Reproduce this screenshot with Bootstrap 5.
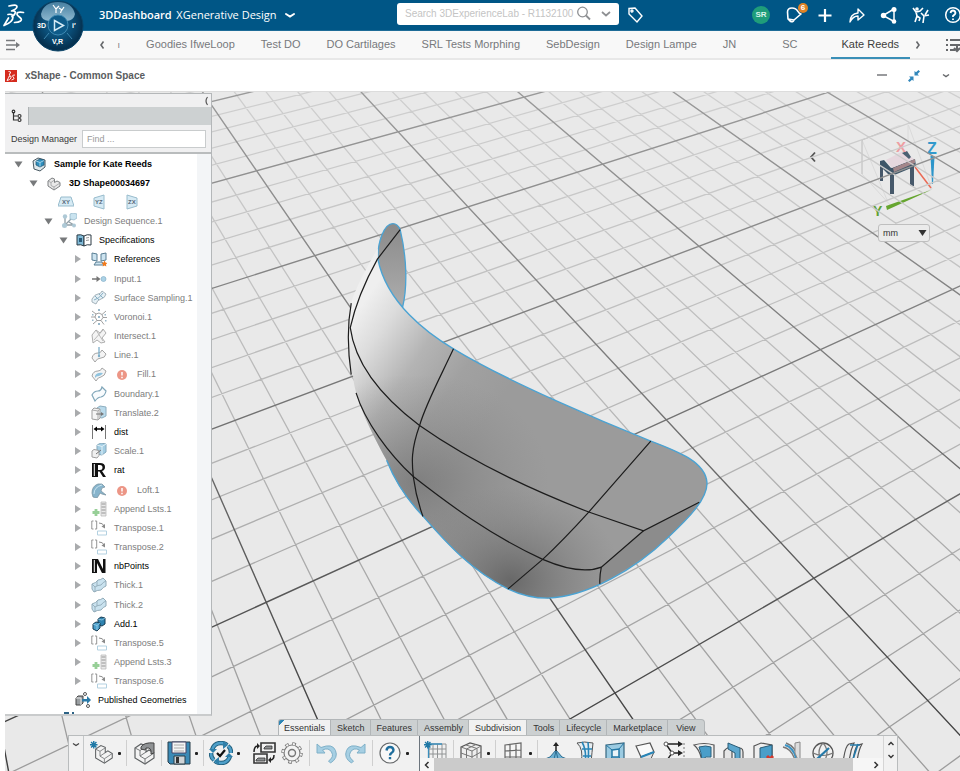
<!DOCTYPE html>
<html lang="en">
<head>
<meta charset="utf-8">
<meta name="viewport" content="width=device-width, initial-scale=1">
<title>3DDashboard XGenerative Design</title>
<link href="https://cdn.jsdelivr.net/npm/bootstrap@5.3.0/dist/css/bootstrap.min.css" rel="stylesheet">
<style>
body{font-family:"Liberation Sans",Arial,sans-serif;font-size:9px;line-height:12px;color:#3a3a3a;background:#fff;overflow-x:hidden}
button{border:0;background:none;padding:0;color:inherit;display:inline-flex;align-items:center;justify-content:center;flex:none}
svg{flex:none;display:block}
.ic16{width:16px;height:16px}
.ic20{width:20px;height:20px}
.ic24{width:24px;height:24px}
/* top bar */
.topbar{background:#005686;height:31px;border-bottom:1px solid #1e6c97;color:#fff;padding-left:2px;position:relative}
.brandbox{flex:0 0 395px}
.brandtitle{margin-left:73px;font:11px/16px "Open Sans","Liberation Sans",sans-serif}
.brandtitle b{font-weight:600}
.compass{position:absolute;left:32px;top:0;z-index:5}
.searchbox{flex:0 1 222px;height:22px;background:#fff;border-radius:3px;padding-left:8px;margin-bottom:2px}
.searchbox input{border:0;outline:0;font-size:10px;min-width:0;padding:0;color:#555}
.searchbox input::placeholder{color:#c4c4c4}
.topact{margin-right:-9px}
.topact button{width:32px;height:28px;position:relative}
.avatar{width:18px;height:18px;border-radius:9px;background:#1f9d7a;font-weight:bold;font-size:8px;line-height:18px;color:#d9f3ea}
.notif{position:absolute;left:21px;top:2px;width:10px;height:10px;border-radius:5px;background:#dd8326;color:#fff;font-size:8px;line-height:10px;font-weight:bold}
/* dashboard tabs */
.dashtabs{background:#f8f8f8;height:29px;border-bottom:2px solid #e8e8e8;color:#77797c;padding-left:5px}
.dashtabs a{font-size:11px;line-height:25px;padding:0 13px;color:#77797c;text-decoration:none;white-space:nowrap}
.dashtabs a.roomy{padding:0 33px}
.dashtabs a.current{color:#3d3d3d;padding:0 11px;border-bottom:2px solid #3a8fb7;margin-bottom:-1px}
.tabtick{padding:0 13px 0 12px}
.wintitle{height:31px;padding-left:5px;color:#5a5d60;font-size:10px}
.wintitle button{width:32px;height:24px}
.winbtns{margin-right:-2px}
/* viewport */
.stage{margin-left:5px;min-height:calc(100vh - 91px);position:relative;background:#e9e9e9;overflow:hidden;border-top:1px solid #dcdcdc}
.scene{position:absolute;left:0;top:0;width:100%;height:100%}
.scene path{vector-effect:non-scaling-stroke}
.treepanel{width:207px;margin-top:1px;background:#f0f0f1;border-top:1px solid #b4b7b9;border-right:1px solid #b4b7b9;border-bottom:2px solid #c9cbcc;position:relative}
.treehead{height:13px;padding-right:2px}
.treetabs{background:#cdd1d2;height:18px}
.treetabs button{width:24px;background:#f0f0f1;border-right:1px solid #aeb2b4}
.finder{height:29px;padding:0 5px 0 6px;border-bottom:2px solid #b9bcbd}
.finder input{height:18px;width:124px;border:1px solid #c9cccd;padding:0 4px;font-size:9px;background:#fff}
.finder input::placeholder{color:#9a9a9a}
.tree{background:#fff;border-right:14px solid #f3f5f7;color:#000;margin:0;padding:0;list-style:none}
.tree li{display:flex;align-items:center;flex:1 1 19px;min-height:19px;white-space:nowrap}
.tree .twist{width:16px;height:16px;margin-right:5px;color:#a9abad}
.tree .open{color:#77797b}
.tree li>.ic16{margin-right:7px}
.lv0{padding-left:5px}.lv1{padding-left:20px}.lv2{padding-left:35px}.lv3{padding-left:50px}.lv4{padding-left:65px}
.lvp{padding-left:70px}.planes{padding-left:53px;gap:10px}
.tree .dim{color:#7d7d7d}
.tree .dim>.ic16{opacity:.62}
.tree li.peek{flex:none;min-height:4px;height:4px;overflow:hidden;align-items:flex-start;padding-left:58px}
.viewtools{margin-right:15px;padding-top:33px}
.cubeback{width:20px;height:20px;margin:22px 32px 0 0}
.unitbox{position:relative;width:52px;margin:4px 0 0 23px}
.unitbox select{appearance:none;width:100%;height:18px;border:1px solid #bfbfbf;border-radius:3px;background:#ebebeb;font-size:9px;line-height:12px;padding:0 4px;color:#333}
.unitbox svg{position:absolute;right:3px;top:5px;pointer-events:none}
/* action bar */
.dockrow{padding-top:3px}
.dock{flex:0 1 830px;min-width:0;margin-left:63px}
.docktabs{margin-left:210px}
.docktabs button{background:#ccd0d1;border:1px solid #b2b6b8;border-width:1px 1px 0 0;height:16px;padding:0 5px 0 6px;font-size:9px;color:#333}
.docktabs button.lit{background:#f1f1f1}
.docktabs button:first-child{padding-left:5px;border-left:1px solid #b2b6b8;border-top-left-radius:3px;background:linear-gradient(135deg,#2f86b5 4px,#f1f1f1 4px)}
.docktabs button:last-child{padding:0 8px;border-top-right-radius:4px}
.dockbar{background:#f1f1f1;border:1px solid #b9bcbd;border-bottom:0;height:36px}
.dockfold{width:15px;border-right:1px solid #c5c8c9;padding-top:6px}
.dockbar .tool{width:28px;height:34px}
.dot{width:7px;height:34px;font-size:8px}
.dot::after{content:"";width:3px;height:3px;background:#222;border-radius:1px}
.rule{width:7px;height:26px;margin-top:4px;background:linear-gradient(#cfcfcf,#cfcfcf) center/1px 100% no-repeat;flex:none}
.cliprow{height:22px;overflow:hidden;padding-left:2px}
.grow{flex:1 1 0;min-width:0}
.dockbar .evenly .tool{flex:1 1 0;width:auto}
.hscroll{height:13px;background:#f6f6f6}
.hscroll div{background:#cbcbcb}
.hscroll button{width:14px}
.hscroll .endbtn{width:30px}
.dockpage{width:14px;border-left:1px solid #d5d5d5}
</style>
<script src="https://cdn.jsdelivr.net/npm/bootstrap@5.3.0/dist/js/bootstrap.bundle.min.js"></script>
</head>
<body>
<svg width="0" height="0" class="position-absolute" aria-hidden="true">
<defs>
<symbol id="tri-r" viewBox="0 0 16 16"><path d="M5 4l6 4-6 4z" fill="currentColor"/></symbol>
<symbol id="tri-d" viewBox="0 0 16 16"><path d="M4.500 5.500h8l-4 6z" fill="currentColor"/></symbol>
<symbol id="cubeblue" viewBox="0 0 16 16"><path d="M2 5l5-3 7 2v7l-5 4-6-2z" fill="#dfe8ec" stroke="#4a5a63"/><path d="M5 5l4-2 4 1v5l-4 2-4-2z" fill="#2f8fbe" stroke="#1d4f6c" stroke-width=".7"/><path d="M5 5l4 1.500 4-2M9 6.500v4" stroke="#bfe2f2" fill="none" stroke-width=".8"/></symbol>
<symbol id="part" viewBox="0 0 16 16"><path d="M2 6l4-3 2.500 1v3.500l2.500-1.500 3 1.500v3.500l-6 4-6-4z" fill="#e9e9e9" stroke="#7c7f81"/><path d="M2 6l3 1.500v3l3 1.500 6-4M5 7.500L8.500 5M8 12v3" fill="none" stroke="#9a9c9e" stroke-width=".8"/></symbol>
<symbol id="seq" viewBox="0 0 16 16"><path d="M4 4l0 8M4 12h9M4 12l6-6M8 9l5 3" stroke="#4f6672" fill="none" stroke-width="1.300"/><path d="M9 1l3-1 4 1v4l-3 2-4-1z" fill="#a9d2e6" stroke="#4b87a5" stroke-width=".7"/><circle cx="4" cy="3.500" r="2.200" fill="#7ea9be"/><circle cx="3.500" cy="12.500" r="2.500" fill="#7ea9be"/><circle cx="13" cy="12.500" r="2" fill="#7ea9be"/></symbol>
<symbol id="book" viewBox="0 0 16 16"><path d="M1 3q4-1 7 1v10q-3-2-7-1z" fill="#7fb9d6" stroke="#2c3b45"/><path d="M15 3q-4-1-7 1v10q3-2 7-1z" fill="#fff" stroke="#2c3b45"/><path d="M3 6h3v4H3z" fill="#2b5a78"/><path d="M10 6l3-.500M10 8.500l3-.500" stroke="#999"/></symbol>
<symbol id="refs" viewBox="0 0 16 16"><path d="M1 2l5 1v7l-5-1zM15 2l-5 1v7l5-1z" fill="#cde4f0" stroke="#5a7f94"/><path d="M3 14l2-3h6l2 3z" fill="#cde4f0" stroke="#5a7f94"/><path d="M13.500 9.500l1 2 2 .5-1.500 1.300.3 2.200-1.800-1-1.800 1 .3-2.200-1.500-1.300 2-.5z" fill="#f07a1c"/></symbol>
<symbol id="inp" viewBox="0 0 16 16"><path d="M1 8h6" stroke="#222" stroke-width="1.500"/><path d="M5.500 5l4 3-4 3z" fill="#222"/><circle cx="12.500" cy="8" r="2.500" fill="#79b7d8" stroke="#3d83a8" stroke-width=".7"/></symbol>
<symbol id="surf" viewBox="0 0 16 16"><path d="M1 9q3-5 6-5 3 0 4-3l4 3q-1 4-5 5-4 1-5 5l-4-2z" fill="#d8e9f2" stroke="#6e8592"/><path d="M4 6l4 4M8 4l4 4M3 10q5-1 9-7" stroke="#3f7ea0" fill="none"/></symbol>
<symbol id="voro" viewBox="0 0 16 16"><path d="M5 5l3-1 3 1.500 1 3-2 3H6L4 8zM5 5L1 2M11 5.500L15 2M12 8.500h4M10 11.500l3 4M6 11.500L2 15M4 8H0" fill="none" stroke="#444" stroke-width=".8"/><path d="M7 7h2v2H7zM7 0h2v2H7zM1 5h1.500v1.500H1zM1 10.500h1.500V12H1zM13.500 5H15v1.500h-1.500zM7 14h2v2H7zM14 11h1.500v1.500H14z" fill="#5b8dab"/></symbol>
<symbol id="inter" viewBox="0 0 16 16"><path d="M1 7l4-5 4 3 3-4 3 4-4 5 3 4-4 1-4-3-4 3z" fill="#eee" stroke="#6f6f6f" stroke-width=".9"/><path d="M5 2l7 11M3 12l9-10" stroke="#777" stroke-width=".8"/></symbol>
<symbol id="lin" viewBox="0 0 16 16"><path d="M1 11q1-5 6-5 3 0 4-3l4 4q-1 4-5 4-4 0-6 4z" fill="#eee" stroke="#6f6f6f"/><path d="M8 0v9" stroke="#2e7eaa" stroke-width="1.300"/><circle cx="8" cy="9" r="1.200" fill="#2e7eaa"/></symbol>
<symbol id="fil" viewBox="0 0 16 16"><path d="M1 10q1-5 6-5 3 0 4-3l4 3q-1 5-5 6-3 0-5 4z" fill="#eee" stroke="#6f6f6f"/><path d="M4 10q2-4 8-3-2 3-4 3-3 0-4 2z" fill="#4d9fca"/></symbol>
<symbol id="boun" viewBox="0 0 16 16"><path d="M1 9q2-4 6-4 3 0 4-4l4 4q-1 5-5 6-3 0-6 4z" fill="#f4fafd" stroke="#33708f" stroke-width="1.200"/></symbol>
<symbol id="trans" viewBox="0 0 16 16"><path d="M6 3l3-2 6 1v9l-4 2-5-1z" fill="#8fc5e0" stroke="#457b98"/><path d="M1 5l2-2 6 1v9l-2 2-6-1z" fill="#eee" stroke="#666"/><path d="M1 5l6 1v9M7 6l2-2" stroke="#777" fill="none"/><path d="M5 9h6" stroke="#222"/><path d="M10 7l3 2-3 2z" fill="#222"/></symbol>
<symbol id="dist" viewBox="0 0 16 16"><path d="M1.500 1v14M14.500 1v14" stroke="#777" /><path d="M4 5h8" stroke="#000" stroke-width="1.500"/><path d="M6 2.500L2.500 5 6 7.500zM10 2.500L13.500 5 10 7.500z" fill="#000"/></symbol>
<symbol id="scal" viewBox="0 0 16 16"><path d="M6 2l4-2 5 1v8l-4 3-5-1z" fill="#6cb0d3" stroke="#3b7594"/><path d="M6 2l5 1.500 4-2.500M11 3.500V12" stroke="#cfe8f4" fill="none"/><path d="M1 8l2-1.500 5 1v5L6 15l-5-1z" fill="#e8e8e8" stroke="#666"/><path d="M5 11l5-4" stroke="#222"/></symbol>
<symbol id="rr" viewBox="0 0 16 16"><path d="M1 1h8q5 0 5 4 0 3-3 4l4 6h-3L8.500 9.500H7V15H1zM7 3v5h2q2.500 0 2.500-2.500T9 3z" fill="#111" fill-rule="evenodd"/><path d="M3.300 2v12" stroke="#fff" stroke-width="1"/></symbol>
<symbol id="nn" viewBox="0 0 16 16"><path d="M1 1h6l5 10V1h2.500v14H11L6 5v10H1z" fill="#111"/><path d="M3.300 2v12" stroke="#fff" stroke-width="1"/></symbol>
<symbol id="loft" viewBox="0 0 16 16"><path d="M1 11Q1 4 7 2l4 0 3 3q-4 0-4 4l5 4-4-1-2-1-1 2-2 3-4-1z" fill="#3e87ad" stroke="#2c556b" stroke-width=".8"/><path d="M3 12q0-7 8-9" stroke="#a8d4e9" fill="none"/></symbol>
<symbol id="err" viewBox="0 0 16 16"><circle cx="8" cy="9" r="5" fill="#e2563d"/><path d="M8 6v3.500M8 10.800v1.400" stroke="#fff" stroke-width="1.500"/></symbol>
<symbol id="app" viewBox="0 0 16 16"><path d="M10 1h5v14h-5z" fill="#ddd" stroke="#888" stroke-width=".7"/><path d="M10.500 3h4M10.500 6h4M10.500 9h4M10.500 12h4" stroke="#555"/><path d="M5 8v7M1.500 11.500h7" stroke="#58b358" stroke-width="2.800"/></symbol>
<symbol id="tpose" viewBox="0 0 16 16"><path d="M2.500 1H.8v8h1.700M4 1h1.700v8H4" fill="none" stroke="#444" stroke-width=".9"/><path d="M8 3q4 0 5 3" fill="none" stroke="#444"/><path d="M14 4l0 4.500-3.500-2z" fill="#444"/><path d="M6.500 13v-2h9v4h-9z" fill="#fff" stroke="#86b6cf"/></symbol>
<symbol id="thk" viewBox="0 0 16 16"><path d="M1 7q4-1 6-4 3 0 5-2l3 3v5q-3 1-5 4-4 0-7 2l-2-3z" fill="#a9d1e6" stroke="#50798e"/><path d="M1 7l3 3q3-2 6-2 2-3 5-4M4 10v5M6 4v5" stroke="#50798e" fill="none" stroke-width=".9"/></symbol>
<symbol id="addb" viewBox="0 0 16 16"><path d="M7 3l3-2 4 1v6l-3 2-4-1z" fill="#2f83b0" stroke="#173d54"/><path d="M2 8l3-2 4 1v5l-3 3-4-2z" fill="#4b9fcb" stroke="#173d54"/><path d="M7 3l4 1 3-2M2 8l4 1.500L9 7M6 9.500V14" stroke="#a9d8ee" stroke-width=".7" fill="none"/></symbol>
<symbol id="publ" viewBox="0 0 16 16"><path d="M1 6l2-2h5v7l-2 2H1z" fill="#9a9fa2" stroke="#444"/><path d="M1 6h5v7" stroke="#e7e7e7" fill="none"/><path d="M7 7h5V4l4 4-4 4V9.500H7z" fill="#2a7aa8"/><circle cx="10" cy="2" r="1.500" fill="#fff" stroke="#555"/><circle cx="13" cy="14" r="1.500" fill="#fff" stroke="#555"/></symbol>
<symbol id="t-part" viewBox="0 0 24 24"><path d="M3 7l6-4 5 2v6l3-2 5 3v5l-9 6-10-6z" fill="#f3f3f3" stroke="#5d6062" stroke-width="1.200"/><path d="M3 7l5 2.500V15l5 3 9-6M8 9.500L14 5.500M13 18v5M8 15l6-4" fill="none" stroke="#77797b"/></symbol>
<symbol id="t-star" viewBox="0 0 24 24"><path d="M4.500 0v9M0 4.500h9M1.300 1.300l6.400 6.400M7.700 1.300L1.300 7.700" stroke="#1f78a5" stroke-width="1.700"/></symbol>
</defs>
</svg>

<header class="topbar d-flex align-items-center">
  <div class="brandbox d-flex align-items-center">
    <svg width="24" height="28" viewBox="0 0 24 28" fill="none" stroke="#fff" stroke-width="1.700" stroke-linecap="round" stroke-linejoin="round"><path d="M7 5q8-2 8 .5T9.500 10q5-.5 3.500 2.500-1 2-3 3M6 13.500q5-1 5 2.500 0 5-9 8.500L6.500 17M21.500 11.500q-6-1-6.500 1-.5 1.500 3 4 2.500 2 .5 3.500-2 1.500-6 1.500"/></svg>
    <div class="brandtitle"><b>3DDashboard</b> &thinsp;XGenerative Design</div>
    <button class="ms-2" aria-label="Choose dashboard"><svg width="10" height="8" viewBox="0 0 10 8"><path d="M1 3l4 2.500L9 3" fill="none" stroke="#fff" stroke-width="2" stroke-linecap="round"/></svg></button>
  </div>
  <form class="searchbox d-flex align-items-center" role="search">
    <input class="flex-fill" type="text" aria-label="Search" placeholder="Search 3DExperienceLab - R1132100">
    <button type="button" aria-label="Run search"><svg width="18" height="18" viewBox="0 0 18 18" fill="none" stroke="#8e9093"><circle cx="7.500" cy="7" r="4.800" stroke-width="1.300"/><path d="M11 10.500l4 4" stroke-width="1.800"/></svg></button>
    <button type="button" class="mx-2" aria-label="Search options"><svg width="10" height="8" viewBox="0 0 10 8"><path d="M1 2l4 3.500L9 2" fill="none" stroke="#8e9093" stroke-width="1.700"/></svg></button>
  </form>
  <button class="ms-2" aria-label="Tags"><svg width="18" height="18" viewBox="0 0 18 18" fill="none" stroke="#fff" stroke-width="1.400"><path d="M2 2.500L8 2l7 8-5 6-8-8z"/><circle cx="5" cy="5" r="1"/></svg></button>
  <div class="topact d-flex align-items-center ms-auto">
    <button aria-label="Profile"><span class="avatar">SR</span></button>
    <button aria-label="Notifications"><svg class="ic20" viewBox="0 0 20 20" fill="none" stroke="#fff" stroke-width="1.600" stroke-linejoin="round"><path d="M5 14L4.500 7q0-4 4.500-4 4 0 6 3.500 1 2 3 2.500l-7 6zM5 14l2 2q3 2 4-1"/></svg><span class="notif">6</span></button>
    <button aria-label="Add"><svg class="ic20" viewBox="0 0 20 20"><path d="M10 4v13M3.500 10.500h13" stroke="#fff" stroke-width="2.200"/></svg></button>
    <button aria-label="Share"><svg class="ic20" viewBox="0 0 20 20"><path d="M3 17q0-8 8-9V4l6 6-6 5v-4q-5 0-8 6z" fill="none" stroke="#fff" stroke-width="1.400" stroke-linejoin="round"/></svg></button>
    <button aria-label="Communities"><svg class="ic20" viewBox="0 0 20 20"><path d="M15 4L4 10.500l11 6z" fill="none" stroke="#fff" stroke-width="1.500"/><circle cx="4.500" cy="10.500" r="2.700" fill="#fff"/><circle cx="15" cy="4.500" r="2.500" fill="#fff"/><circle cx="15" cy="16.500" r="2.300" fill="#fff"/></svg></button>
    <button aria-label="Collaboration"><svg class="ic20" viewBox="0 0 20 20" fill="none" stroke="#fff" stroke-width="1.600"><path d="M2 3l3 4 4-1 3-3M5 7l1 4-2 6M6 11l3 2-1 3M10 8l3 3 5-1M13 11l-1 7M17 5l-3 5"/><circle cx="6" cy="4" r="1"/></svg></button>
    <button aria-label="Help"><svg class="ic20" viewBox="0 0 20 20" fill="none" stroke="#fff" stroke-width="1.500"><circle cx="10" cy="10" r="7.300"/><path d="M7.500 8q.5-2.500 2.500-2.500T12.500 8q0 1-2.500 3v1M10 13.500V15" stroke-width="1.800"/></svg></button>
  </div>
  <button class="compass" aria-label="Compass">
    <svg width="52" height="52" viewBox="0 0 52 52">
      <defs><radialGradient id="cg" cx=".5" cy=".45"><stop offset="0" stop-color="#1b6f9d"/><stop offset=".6" stop-color="#0a4c75"/><stop offset="1" stop-color="#053150"/></radialGradient><linearGradient id="ct" x1="0" y1="0" x2="0" y2="1"><stop offset="0" stop-color="#4f87a8"/><stop offset="1" stop-color="#9bc3d8"/></linearGradient></defs>
      <circle cx="26" cy="26" r="25" fill="url(#cg)" stroke="#0a4468"/>
      <path d="M9 14Q12 2 26 2t17 12q-1 6-8 7-4-6-9-6t-9 6q-8-1-8-7z" fill="url(#ct)" opacity=".9"/>
      <circle cx="26" cy="25" r="10" fill="#0e5b89" stroke="#3f8ab3"/>
      <path d="M22.500 20.500l9 5-9 5z" fill="none" stroke="#d7ebf5" stroke-width="1.500"/>
      <path d="M12 39l5-6M40 39l-5-6" stroke="#3b86ae"/>
      <path d="M21 5l3 4 3-3M24 9v4M27 8l3 2 2-3M29.500 10l-1 3" stroke="#fff" stroke-width="1.200" fill="none"/>
      <g fill="#fff" font-family="Liberation Sans" font-weight="bold" font-size="7"><text x="5" y="28">3D</text><text x="40" y="28">i&#8242;</text><text x="20" y="44">V,R</text></g>
    </svg>
  </button>
</header>

<nav class="dashtabs d-flex align-items-center" aria-label="Dashboard tabs">
  <button aria-label="Toggle menu"><svg class="ic16" viewBox="0 0 16 16" stroke="#77797c" stroke-width="1.600" fill="none"><path d="M1 3.500h9M1 8h11M1 12.500h9"/><path d="M11 5l4 3-4 3z" fill="#77797c" stroke="none"/></svg></button>
  <button class="ms-auto" aria-label="Previous tabs"><svg width="8" height="10" viewBox="0 0 8 10"><path d="M5.500 1.500L3 5l2.500 3.500" fill="none" stroke="#66686b" stroke-width="1.600"/></svg></button>
  <span class="tabtick">ı</span>
  <a href="#">Goodies IfweLoop</a><a href="#">Test DO</a><a href="#">DO Cartilages</a><a href="#">SRL Tests Morphing</a><a href="#">SebDesign</a><a href="#">Design Lampe</a><a href="#">JN</a><a href="#" class="roomy">SC</a><a href="#" class="current" aria-current="page">Kate Reeds</a>
  <button class="ms-1" aria-label="Next tabs"><svg width="8" height="10" viewBox="0 0 8 10"><path d="M2.500 1.500L5 5l-2.500 3.500" fill="none" stroke="#66686b" stroke-width="1.600"/></svg></button>
  <button class="ms-4 me-n1" aria-label="Tab list"><svg width="14" height="16" viewBox="0 0 14 16" stroke="#66686b" stroke-width="2" fill="none"><path d="M0 3h2M4 3h10M0 8h2M4 8h10M0 13h2M4 13h5M11 8v6M8 11l3 3 3-3"/></svg></button>
</nav>

<div class="wintitle d-flex align-items-center">
  <svg width="12" height="12" viewBox="0 0 12 12"><path d="M0 0h12v12H0z" fill="#d52b1e"/><path d="M3.500 1.500q3 0 2 1.500T4 4q2 1 0 2.500M4.500 6L2 10.500q3-.5 4-2.500T4.500 6M10 5q-3 0-2.500 1t1.500 2-2.500 2" fill="none" stroke="#fff" stroke-width=".9"/></svg>
  <b class="ps-2">xShape - Common Space</b>
  <div class="winbtns d-flex ms-auto">
  <button aria-label="Minimize"><svg width="10" height="8" viewBox="0 0 10 8"><path d="M0 3h10" stroke="#77797c" stroke-width="1.500"/></svg></button>
  <button aria-label="Restore"><svg width="12" height="12" viewBox="0 0 12 12"><path d="M6.500 5.500V1l1.500 1.300L10.500 0 12 1.500 9.500 4 11 5.500zM5.500 6.500V11L4 9.700 1.500 12 0 10.500 2.500 8 1 6.500z" fill="#3187bb"/></svg></button>
  <button aria-label="Window menu"><svg width="8" height="6" viewBox="0 0 8 6"><path d="M1 1.500l3 2 3-2" fill="none" stroke="#66686b" stroke-width="1.500"/></svg></button>
  </div>
</div>

<main class="stage d-flex flex-column">
  <svg class="scene" viewBox="5 91 955 680" preserveAspectRatio="xMinYMin slice" role="img" aria-label="3D shape over a reference grid">
    <defs>
      <linearGradient id="gmin" gradientUnits="userSpaceOnUse" x1="0" y1="0" x2="0" y2="1600"><stop offset="0" stop-color="#cfcfcf"/><stop offset=".4" stop-color="#bcbcbc"/><stop offset="1" stop-color="#9c9c9c"/></linearGradient>
      <linearGradient id="gmaj" gradientUnits="userSpaceOnUse" x1="0" y1="0" x2="0" y2="1600"><stop offset="0" stop-color="#9a9a9a"/><stop offset=".4" stop-color="#7c7c7c"/><stop offset="1" stop-color="#404040"/></linearGradient>
      <linearGradient id="body" gradientUnits="userSpaceOnUse" x1="325" y1="540" x2="640" y2="720"><stop offset="0" stop-color="#efefef"/><stop offset=".18" stop-color="#dcdcdc"/><stop offset=".45" stop-color="#b4b4b4"/><stop offset=".72" stop-color="#a1a1a1"/><stop offset="1" stop-color="#9b9b9b"/></linearGradient>
      <radialGradient id="shadA" gradientUnits="userSpaceOnUse" cx="640" cy="1200" r="230"><stop offset="0" stop-color="#686868"/><stop offset="1" stop-color="#808080" stop-opacity="0"/></radialGradient>
      <radialGradient id="shadB" gradientUnits="userSpaceOnUse" cx="450" cy="960" r="270"><stop offset="0" stop-color="#727272" stop-opacity=".7"/><stop offset="1" stop-color="#888" stop-opacity="0"/></radialGradient>
      <linearGradient id="lobe" x1="0" y1="0" x2="0" y2="1"><stop offset="0" stop-color="#8a8a8a"/><stop offset="1" stop-color="#adadad"/></linearGradient>
    </defs>
    <g transform="translate(200 90) scale(.4847 .408)" fill="none">
      <path id="minor" stroke="url(#gmin)" stroke-width="1.300"/>
      <path id="major" stroke="url(#gmaj)" stroke-width="1.400"/>
      <path d="M398 325C380 325 366 370 367 412C372 460 390 495 418 530C428 480 427 410 413 340Q408 325 398 325z" fill="url(#lobe)" stroke="#4ba3d3" stroke-width="1.300"/>
      <path d="M367 385C345 430 318 490 312 520C303 560 303 650 316 700C318 745 345 820 385 905C405 965 430 1005 460 1042C510 1110 560 1175 635 1220Q675 1243 718 1243C800 1240 900 1170 965 1095C1010 1045 1047 1000 1046 960C1043 910 990 885 930 858C840 815 630 710 523 632C470 595 385 520 367 412z" fill="url(#body)"/>
      <path d="M316 700C318 745 345 820 385 905C405 965 430 1005 460 1042C510 1110 560 1175 635 1220Q675 1243 718 1243C800 1240 900 1170 965 1095L1046 960L523 700z" fill="url(#shadB)"/>
      <path d="M385 905C405 965 430 1005 460 1042C510 1110 560 1175 635 1220Q675 1243 718 1243C800 1240 900 1170 965 1095L1000 900L523 800z" fill="url(#shadA)"/>
      <path d="M915 1078L1030 1008Q1000 1060 965 1095C930 1135 880 1175 825 1208L828 1167z" fill="#8c8c8c"/>
      <path d="M385 905C405 965 430 1005 460 1042C510 1110 560 1175 635 1220Q675 1243 718 1243C800 1240 900 1170 965 1095C1010 1045 1047 1000 1046 960C1043 910 990 885 930 858C840 815 630 710 523 632C470 595 385 520 367 412" stroke="#4ba3d3" stroke-width="1.400"/>
      <g stroke="#1c1c1c" stroke-width="1.200">
        <path d="M413 340L366 412Q325 500 310 580C320 670 375 750 453 820C560 910 700 985 802 1032L915 1078L1030 1008"/>
        <path d="M312 520Q300 600 312 695M322 740C340 810 390 890 440 945C510 1010 600 1090 707 1148C760 1175 800 1180 828 1167L915 1078M828 1167Q824 1190 825 1208"/>
        <path d="M523 632C490 715 465 770 453 820C435 880 437 910 440 945C445 990 450 1010 460 1043M930 858L802 1032Q750 1100 707 1148L635 1221"/>
      </g>
    </g>
  </svg>

  <div class="d-flex flex-fill align-items-stretch">
    <aside class="treepanel d-flex flex-column">
      <div class="treehead d-flex justify-content-end"><button aria-label="Collapse panel"><svg width="6" height="10" viewBox="0 0 6 10"><path d="M4.500 1Q1.500 5 4.500 9" fill="none" stroke="#555" stroke-width="1.200"/></svg></button></div>
      <div class="treetabs d-flex"><button aria-label="Tree"><svg width="14" height="14" viewBox="0 0 14 14" fill="none" stroke="#333" stroke-width="1.200"><path d="M3.500 3v8h4M3.500 7h4"/><circle cx="3.500" cy="2.500" r="1.300"/><circle cx="9.500" cy="7" r="1.500"/><circle cx="9.500" cy="11" r="1.500"/></svg></button></div>
      <div class="finder d-flex align-items-center justify-content-between"><label for="find">Design Manager</label><input id="find" type="text" placeholder="Find ..."></div>
      <ul class="tree d-flex flex-column flex-fill">
        <li class="lv0 fw-bold"><button class="twist open" aria-label="Collapse"><svg class="ic16"><use href="#tri-d"/></svg></button><svg class="ic16"><use href="#cubeblue"/></svg>Sample for Kate Reeds</li>
        <li class="lv1 fw-bold"><button class="twist open" aria-label="Collapse"><svg class="ic16"><use href="#tri-d"/></svg></button><svg class="ic16"><use href="#part"/></svg>3D Shape00034697</li>
        <li class="planes">
          <svg class="ic16" viewBox="0 0 16 16"><path d="M3 3h10l3 9H0z" fill="#d6eaf4" stroke="#98bccd"/><text x="4" y="10" font-size="6" font-weight="bold" fill="#567">XY</text></svg>
          <svg class="ic16" viewBox="0 0 16 16"><path d="M3 4l10-3v14L3 12z" fill="#d6eaf4" stroke="#98bccd"/><text x="4" y="10" font-size="6" font-weight="bold" fill="#567">YZ</text></svg>
          <svg class="ic16" viewBox="0 0 16 16"><path d="M13 4L3 1v14l10-3z" fill="#d6eaf4" stroke="#98bccd"/><text x="4" y="10" font-size="6" font-weight="bold" fill="#567">ZX</text></svg>
        </li>
        <li class="lv2 dim"><button class="twist open" aria-label="Collapse"><svg class="ic16"><use href="#tri-d"/></svg></button><svg class="ic16"><use href="#seq"/></svg>Design Sequence.1</li>
        <li class="lv3"><button class="twist open" aria-label="Collapse"><svg class="ic16"><use href="#tri-d"/></svg></button><svg class="ic16"><use href="#book"/></svg>Specifications</li>
        <li class="lv4"><button class="twist" aria-label="Expand"><svg class="ic16"><use href="#tri-r"/></svg></button><svg class="ic16"><use href="#refs"/></svg>References</li>
        <li class="lv4 dim"><button class="twist" aria-label="Expand"><svg class="ic16"><use href="#tri-r"/></svg></button><svg class="ic16"><use href="#inp"/></svg>Input.1</li>
        <li class="lv4 dim"><button class="twist" aria-label="Expand"><svg class="ic16"><use href="#tri-r"/></svg></button><svg class="ic16"><use href="#surf"/></svg>Surface Sampling.1</li>
        <li class="lv4 dim"><button class="twist" aria-label="Expand"><svg class="ic16"><use href="#tri-r"/></svg></button><svg class="ic16"><use href="#voro"/></svg>Voronoi.1</li>
        <li class="lv4 dim"><button class="twist" aria-label="Expand"><svg class="ic16"><use href="#tri-r"/></svg></button><svg class="ic16"><use href="#inter"/></svg>Intersect.1</li>
        <li class="lv4 dim"><button class="twist" aria-label="Expand"><svg class="ic16"><use href="#tri-r"/></svg></button><svg class="ic16"><use href="#lin"/></svg>Line.1</li>
        <li class="lv4 dim"><button class="twist" aria-label="Expand"><svg class="ic16"><use href="#tri-r"/></svg></button><svg class="ic16"><use href="#fil"/></svg><svg class="ic16"><use href="#err"/></svg>Fill.1</li>
        <li class="lv4 dim"><button class="twist" aria-label="Expand"><svg class="ic16"><use href="#tri-r"/></svg></button><svg class="ic16"><use href="#boun"/></svg>Boundary.1</li>
        <li class="lv4 dim"><button class="twist" aria-label="Expand"><svg class="ic16"><use href="#tri-r"/></svg></button><svg class="ic16"><use href="#trans"/></svg>Translate.2</li>
        <li class="lv4"><button class="twist" aria-label="Expand"><svg class="ic16"><use href="#tri-r"/></svg></button><svg class="ic16"><use href="#dist"/></svg>dist</li>
        <li class="lv4 dim"><button class="twist" aria-label="Expand"><svg class="ic16"><use href="#tri-r"/></svg></button><svg class="ic16"><use href="#scal"/></svg>Scale.1</li>
        <li class="lv4"><button class="twist" aria-label="Expand"><svg class="ic16"><use href="#tri-r"/></svg></button><svg class="ic16"><use href="#rr"/></svg>rat</li>
        <li class="lv4 dim"><button class="twist" aria-label="Expand"><svg class="ic16"><use href="#tri-r"/></svg></button><svg class="ic16"><use href="#loft"/></svg><svg class="ic16"><use href="#err"/></svg>Loft.1</li>
        <li class="lv4 dim"><button class="twist" aria-label="Expand"><svg class="ic16"><use href="#tri-r"/></svg></button><svg class="ic16"><use href="#app"/></svg>Append Lsts.1</li>
        <li class="lv4 dim"><button class="twist" aria-label="Expand"><svg class="ic16"><use href="#tri-r"/></svg></button><svg class="ic16"><use href="#tpose"/></svg>Transpose.1</li>
        <li class="lv4 dim"><button class="twist" aria-label="Expand"><svg class="ic16"><use href="#tri-r"/></svg></button><svg class="ic16"><use href="#tpose"/></svg>Transpose.2</li>
        <li class="lv4"><button class="twist" aria-label="Expand"><svg class="ic16"><use href="#tri-r"/></svg></button><svg class="ic16"><use href="#nn"/></svg>nbPoints</li>
        <li class="lv4 dim"><button class="twist" aria-label="Expand"><svg class="ic16"><use href="#tri-r"/></svg></button><svg class="ic16"><use href="#thk"/></svg>Thick.1</li>
        <li class="lv4 dim"><button class="twist" aria-label="Expand"><svg class="ic16"><use href="#tri-r"/></svg></button><svg class="ic16"><use href="#thk"/></svg>Thick.2</li>
        <li class="lv4"><button class="twist" aria-label="Expand"><svg class="ic16"><use href="#tri-r"/></svg></button><svg class="ic16"><use href="#addb"/></svg>Add.1</li>
        <li class="lv4 dim"><button class="twist" aria-label="Expand"><svg class="ic16"><use href="#tri-r"/></svg></button><svg class="ic16"><use href="#tpose"/></svg>Transpose.5</li>
        <li class="lv4 dim"><button class="twist" aria-label="Expand"><svg class="ic16"><use href="#tri-r"/></svg></button><svg class="ic16"><use href="#app"/></svg>Append Lsts.3</li>
        <li class="lv4 dim"><button class="twist" aria-label="Expand"><svg class="ic16"><use href="#tri-r"/></svg></button><svg class="ic16"><use href="#tpose"/></svg>Transpose.6</li>
        <li class="lvp"><svg class="ic16"><use href="#publ"/></svg>Published Geometries</li>
        <li class="peek"><svg width="14" height="4" viewBox="0 0 14 4"><path d="M1 2h5v2H1zM9 2h2v2H9z" fill="#2c6285"/></svg></li>
      </ul>
    </aside>
    <div class="viewtools d-flex align-items-start ms-auto">
      <button class="cubeback" aria-label="Show view tools"><svg width="8" height="12" viewBox="0 0 8 12"><path d="M6 1.500L2 6l4 4.500" fill="none" stroke="#555" stroke-width="1.800"/></svg></button>
      <div>
        <svg width="90" height="95" viewBox="855 125 90 95">
          <path d="M862 174v-34l46-18v20M862 140l25 60M908 124l24 65-40 18-30-33" fill="none" stroke="#dadada"/>
          <path d="M862 174v-34l20-8" fill="none" stroke="#c2c2c2"/>
          <path d="M880 166l3 1v14h-3zM890 172h4v22h-4zM910 166h4v20h-4z" fill="#46586a"/>
          <path d="M880 161l4-1 7 8 24-9 1 7-24 10-4-2-8-8z" fill="#3d5568"/>
          <path d="M886 160l17-9 11 8-22 9z" fill="#e6d7de"/><path d="M893 168l22-9v4l-21 9z" fill="#a3868a"/>
          <path d="M902 153l5-2 4 6-2 2z" fill="#4b6072"/>
          <path d="M915 167l16 21" stroke="#ea6a55" stroke-width="1.500"/>
          <path d="M930.500 156h4l-1.500 28h-1z" fill="#2b95ca"/>
          <path d="M886 206l1 4 44-20z" fill="#66a62f"/>
          <g font-family="Liberation Sans" font-weight="bold"><text x="896" y="152" font-size="15" fill="#ee9ea2">X</text><text x="927" y="154" font-size="16" fill="#3199cc">Z</text><text x="873" y="216" font-size="14" fill="#5fa030">Y</text></g>
        </svg>
        <div class="unitbox"><select aria-label="Length unit"><option>mm</option><option>cm</option></select><svg width="9" height="8" viewBox="0 0 9 8"><path d="M.5 1h8l-4 6z" fill="#333"/></svg></div>
      </div>
    </div>
  </div>

  <div class="dockrow d-flex position-relative">
    <div class="dock">
      <div class="docktabs d-flex" role="tablist">
        <button role="tab" class="lit">Essentials</button><button role="tab">Sketch</button><button role="tab">Features</button><button role="tab">Assembly</button><button role="tab" class="lit" aria-selected="true">Subdivision</button><button role="tab">Tools</button><button role="tab">Lifecycle</button><button role="tab">Marketplace</button><button role="tab">View</button>
      </div>
      <div class="dockbar d-flex">
        <div class="dockfold text-center"><button class="d-block mx-auto" aria-label="Collapse toolbar"><svg width="8" height="6" viewBox="0 0 8 6"><path d="M1 1.500l3 2 3-2" fill="none" stroke="#444" stroke-width="1.300"/></svg></button></div>
        <div class="d-flex ps-1">
          <button class="tool" aria-label="New"><svg class="ic24" viewBox="0 0 24 24"><use href="#t-part" x="3" y="2" width="21" height="21"/><use href="#t-star" width="20" height="20"/></svg></button><button class="dot" aria-label="More new options"></button><span class="rule"></span>
          <button class="tool" aria-label="Body"><svg class="ic24" viewBox="0 0 24 24"><use href="#t-part" width="24" height="24"/><path d="M9 6q3-5 13-4v10l-3 1q1-7-5-6l-1 2-4-1z" fill="#8f9294" stroke="#444"/></svg></button><span class="rule"></span>
          <button class="tool" aria-label="Save"><svg class="ic24" viewBox="0 0 24 24"><path d="M1 1h22v22H3l-2-2z" fill="#3a8ab6" stroke="#263c49"/><path d="M5 1h14v11H5z" fill="#f5f5f5" stroke="#446"/><path d="M7 4h10M7 7h10M7 10h10" stroke="#aaa"/><path d="M7 15h11v8H7z" fill="#cfd4d7" stroke="#263c49"/><path d="M9 16h3v6H9z" fill="#333"/></svg></button><button class="dot" aria-label="More save options"></button><span class="rule"></span>
          <button class="tool" aria-label="Update"><svg class="ic24" viewBox="0 0 24 24"><path d="M3 9Q5 2 12 2q4 0 6 2M21 15q-2 7-9 7-4 0-6-2M2 12q0 5 3 7M22 12q0-5-3-7" fill="none" stroke="#23617f" stroke-width="4.500"/><path d="M3 9Q5 2 12 2q4 0 6 2M21 15q-2 7-9 7-4 0-6-2M2 12q0 5 3 7M22 12q0-5-3-7" fill="none" stroke="#4ea0ca" stroke-width="2.500"/><path d="M0 8h8l-4 4zM24 16h-8l4-4zM14 0v8l5-4zM10 24v-8l-5 4z" fill="#2f7fa9"/><path d="M8 12l3 3 5-6" fill="none" stroke="#111" stroke-width="2.200"/></svg></button><button class="dot" aria-label="More update options"></button>
          <button class="tool ms-2" aria-label="Swap windows"><svg class="ic24" viewBox="0 0 24 24"><path d="M9 2h14v9H9zM2 13h13v9H2z" fill="#f2f2f2" stroke="#333" stroke-width="1.600"/><path d="M12 7l2-2h6v3h-8zM4 19l2-2h7v3H4z" fill="#8c8f91" stroke="#333" stroke-width=".8"/><path d="M2 11Q2 5 6 5M22 14q0 5-4 5" fill="none" stroke="#222" stroke-width="1.500"/><path d="M5 2l3 3-3 3zM19 16l-3 3 3 3z" fill="#222"/></svg></button>
          <button class="tool" aria-label="Settings"><svg class="ic24" viewBox="0 0 24 24"><circle cx="12" cy="12" r="9" fill="none" stroke="#777" stroke-width="3.500" stroke-dasharray="3.500 3.570"/><circle cx="12" cy="12" r="8" fill="#f3f3f3" stroke="#777" stroke-width="1.200"/><circle cx="12" cy="12" r="9" fill="none" stroke="#f3f3f3" stroke-width="2" stroke-dasharray="2 5.070" stroke-dashoffset="-.7"/><circle cx="12" cy="12" r="3.500" fill="#f1f1f1" stroke="#777" stroke-width="1.400"/></svg></button><span class="rule"></span>
          <button class="tool" aria-label="Undo"><svg class="ic24" viewBox="0 0 24 24"><path d="M2 3v9h8L7.500 9q6-3 9 2t-3 9l2 2q8-5 5-12.500T6 6.500z" fill="#a6cfe3" stroke="#7fb0c8"/></svg></button>
          <button class="tool" aria-label="Redo"><svg class="ic24" viewBox="0 0 24 24"><path transform="matrix(-1 0 0 1 24 0)" d="M2 3v9h8L7.500 9q6-3 9 2t-3 9l2 2q8-5 5-12.500T6 6.500z" fill="#a6cfe3" stroke="#7fb0c8"/></svg></button><span class="rule"></span>
          <button class="tool" aria-label="Help"><svg class="ic24" viewBox="0 0 24 24"><circle cx="12" cy="12" r="10" fill="#f8f8f8" stroke="#66696b" stroke-width="1.200"/><path d="M8.500 9.500Q9 6 12 6t3.500 3q0 2-2 3-1.500 1-1.500 2.500M12 16v2.200" fill="none" stroke="#1f6e9d" stroke-width="2.400"/></svg></button><button class="dot" aria-label="More help options"></button>
        </div>
        <div class="grow border-start border-secondary ms-2">
          <div class="cliprow d-flex">
            <button class="tool" aria-label="Primitive grid"><svg class="ic24" viewBox="0 0 24 24"><path d="M5 3h17v20H5zM5 8h17M5 13h17M5 18h17M9 3v20M13.500 3v20M18 3v20" fill="none" stroke="#909394"/><path d="M4 3h14M4.500 3v20" stroke="#3a8ebd" stroke-width="1.300"/><use href="#t-star" width="20" height="20"/></svg></button><span class="rule"></span>
            <button class="tool" aria-label="Box"><svg class="ic24" viewBox="0 0 24 24"><path d="M2 6l9-4 11 3v13l-8 5-12-4z" fill="#eee" stroke="#555" stroke-width="1.200"/><path d="M2 6l11 4 9-5M13 10v13M7 4l11 3.500v12M17 3.500L7.500 8v13M2 12l11 4 9-5" fill="none" stroke="#777"/></svg></button><button class="dot" aria-label="More primitives"></button><span class="rule"></span>
            <button class="tool" aria-label="Face grid"><svg class="ic24" viewBox="0 0 24 24"><path d="M4 4l16-2v20H4zM4 10l16-1M4 16h16M9 3.500V22M15 2.500V22" fill="#f5f5f5" stroke="#666" stroke-width="1.200"/></svg></button><button class="dot" aria-label="More faces"></button><span class="rule"></span>
            <div class="grow evenly d-flex me-3">
              <button class="tool" aria-label="Modify"><svg class="ic24" viewBox="0 0 24 24"><path d="M12 9l6 7 5 2-5 5H6l-5-5 5-2z" fill="#6db1d3" stroke="#2c6d91"/><path d="M12 10V3" stroke="#222" stroke-width="1.500"/><path d="M9 5l3-4 3 4z" fill="#222"/><path d="M12 10L9 22M12 10l3 12" stroke="#2c6d91"/></svg></button>
              <button class="tool" aria-label="Insert loop"><svg class="ic24" viewBox="0 0 24 24"><path d="M4 2q7-2 16 0-1 9-2 20H8Q11 8 4 2z" fill="#e7eef2" stroke="#555"/><path d="M9 1q5 9 3 21M15 1q1 9 0 21M9 8h10M10 15h8" fill="none" stroke="#2985b7" stroke-width="1.600"/></svg></button>
              <button class="tool" aria-label="Inset"><svg class="ic24" viewBox="0 0 24 24"><path d="M3 4l18-2v20H3z" fill="#9bcbe2" stroke="#35667f" stroke-width="1.200"/><path d="M9 9l7-1v8H9z" fill="#eaf4f9" stroke="#2378a6" stroke-width="1.500"/><path d="M3 4l6 5M21 2l-5 6M3 22l6-6M21 22l-5-6" stroke="#2378a6"/></svg></button>
              <button class="tool" aria-label="Crease"><svg class="ic24" viewBox="0 0 24 24"><path d="M3 5l14-3 4 9-13 5z" fill="#fafafa" stroke="#555" stroke-width="1.200"/><path d="M21 11l-4 9-10 3 1-7z" fill="#e1e1e1" stroke="#555"/><path d="M8 16l13-5" stroke="#2985b7" stroke-width="2"/></svg></button>
              <button class="tool" aria-label="Align"><svg class="ic24" viewBox="0 0 24 24"><path d="M4 3h14M4 3l6 9h8M10 12L3 22" fill="none" stroke="#222" stroke-width="1.400"/><path d="M16 0l5 3-5 3zM16 9l5 3-5 3z" fill="#222"/><path d="M22 2v21" stroke="#777" stroke-dasharray="2 2"/><circle cx="4" cy="3" r="2" fill="#fff" stroke="#555"/><circle cx="10" cy="12" r="2" fill="#fff" stroke="#555"/></svg></button>
              <button class="tool" aria-label="Fill"><svg class="ic24" viewBox="0 0 24 24"><path d="M2 4q10-3 20 0v14q-7-2-12 4Q9 10 2 4z" fill="#eee" stroke="#555" stroke-width="1.200"/><path d="M7 6q7-2 12 0v10q-5-1-9 2-1-7-3-12z" fill="#4a9ec9" stroke="#2b627f"/></svg></button>
              <button class="tool" aria-label="Cut"><svg class="ic24" viewBox="0 0 24 24"><path d="M2 10q5-6 8-2v13l-8-2zM13 8q8-3 8 3v8l-6 3z" fill="#e6e6e6" stroke="#555" stroke-width="1.200"/><path d="M6 2l12 5v15l-5-3v-7L6 8z" fill="#5ba7ce" stroke="#2a5c76"/></svg></button>
              <button class="tool" aria-label="Delete face"><svg class="ic24" viewBox="0 0 24 24"><path d="M3 5l7-3 11 2v14l-7 4-11-3z" fill="#eee" stroke="#555" stroke-width="1.200"/><path d="M9 7l12-3v14l-9 3-3-2z" fill="#4a9ec9" stroke="#2a5c76"/><path d="M16 15l6 6M22 15l-6 6" stroke="#d5382c" stroke-width="3"/></svg></button>
              <button class="tool" aria-label="Thicken"><svg class="ic24" viewBox="0 0 24 24"><path d="M2 6q10 2 13 17M5 2q11 4 13 19" fill="none" stroke="#777" stroke-width="1.400"/><path d="M4 4q10 3 12 18" fill="none" stroke="#3a93c4" stroke-width="2"/><path d="M14 2l5-1v18h-2L14 12z" fill="#ddd" stroke="#888"/></svg></button>
              <button class="tool" aria-label="Sphere"><svg class="ic24" viewBox="0 0 24 24"><circle cx="12" cy="12" r="10" fill="#f1f1f1" stroke="#555" stroke-width="1.300"/><path d="M2 12q10 5 20 0M12 2q-8 9 0 20M12 2q8 9 0 20" fill="none" stroke="#777" stroke-width="1.200"/><path d="M6 18L18 7" stroke="#2479a8" stroke-width="2.200"/></svg></button>
              <button class="tool" aria-label="Bridge"><svg class="ic24" viewBox="0 0 24 24"><path d="M3 22Q5 5 9 3l5-1q-4 8-5 20zM13 22q1-14 5-18l4-1q-4 7-5 19z" fill="#eee" stroke="#555" stroke-width="1.200"/><path d="M10 4h10M18 3l-6 18" stroke="#2479a8" stroke-width="1.700"/></svg></button>
            </div>
          </div>
          <div class="hscroll d-flex"><button aria-label="Scroll left"><svg width="8" height="8" viewBox="0 0 8 8"><path d="M5.500 1L2.500 4l3 3" fill="none" stroke="#333" stroke-width="1.500"/></svg></button><div class="grow"></div><button class="endbtn ps-3" aria-label="Scroll right"><svg width="8" height="8" viewBox="0 0 8 8"><path d="M2.500 1l3 3-3 3" fill="none" stroke="#333" stroke-width="1.500"/></svg></button></div>
        </div>
        <div class="dockpage d-flex flex-column align-items-center gap-1 pt-1"><button aria-label="Previous row"><svg width="8" height="8" viewBox="0 0 8 8"><path d="M1.500 5L4 2.500 6.500 5" fill="none" stroke="#333" stroke-width="1.400"/></svg></button><button aria-label="Next row"><svg width="8" height="8" viewBox="0 0 8 8"><path d="M1.500 3L4 5.500 6.500 3" fill="none" stroke="#333" stroke-width="1.400"/></svg></button></div>
      </div>
    </div>
  </div>
</main>
<script>
// Perspective projection of the ground plane: (i, j) are major-cell coordinates.
const depth = (i, j) => 1 + 0.065 * i - 0.1092 * j;
const at = (i, j) => {
  const d = depth(i, j);
  return ((553 + 331.5 * i + 99.5 * j) / d).toFixed(1) + ' ' + ((284 - 93.3 * i + 173 * j) / d).toFixed(1);
};
let minor = '', major = '';
for (let n = -40; n <= 55; n++) {
  const k = n / 5;
  const jEnd = Math.min(8, (0.95 + 0.065 * k) / 0.1092);
  const iStart = Math.max(-10, (0.1092 * k - 0.95) / 0.065);
  let seg = 'M' + at(k, -7) + 'L' + at(k, jEnd);
  if (k < 8) seg += 'M' + at(iStart, k) + 'L' + at(10, k);
  if (n % 5) minor += seg; else major += seg;
}
document.getElementById('minor').setAttribute('d', minor);
document.getElementById('major').setAttribute('d', major);
</script>
</body>
</html>
